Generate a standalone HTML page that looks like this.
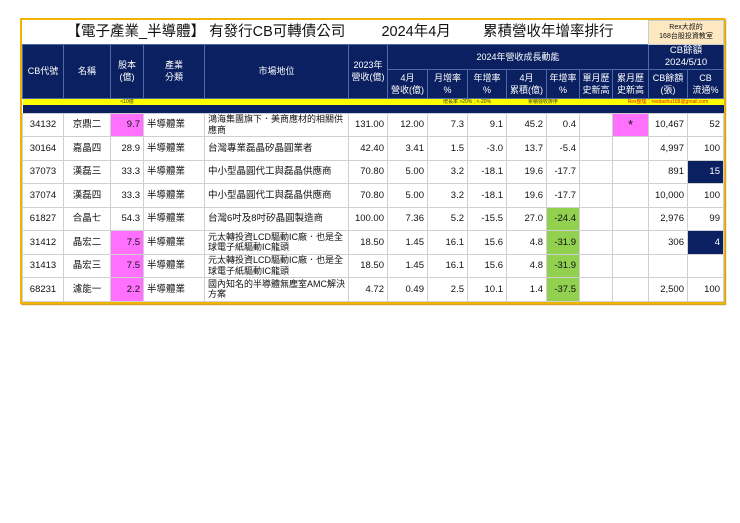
<!DOCTYPE html>
<html><head><meta charset="utf-8"><style>
html,body{margin:0;padding:0;background:#fff;width:740px;height:523px;overflow:hidden}
body{font-family:"Liberation Sans","Noto Sans CJK TC",sans-serif}
#f{position:absolute;left:20px;top:18px;border:2px solid #f0b400;width:701px;box-shadow:1px 1px 1px #c89000}
table{border-collapse:collapse;table-layout:fixed;width:701px}
td{padding:0 3px;font-size:9.5px;color:#111;border:1px solid #cfcfcf;overflow:hidden;white-space:nowrap;line-height:11px}
.t td{border:none}
.h td{background:#0b2060;color:#fff;text-align:center;border:1px solid #4a6aa8;font-size:9px;line-height:12px;padding:0}
.y td{background:#ffff00;font-size:5px;line-height:6px;height:6px;border:none;color:#333;padding:0}
.nb td{background:#0b2060;height:8px;border:none;padding:0}
.r td{height:22.5px}
.c{text-align:center}.rt{text-align:right}
.m{background:#ff70ff}.g{background:#92d050}.n{background:#0b2060;color:#fff!important}
.w{white-space:normal;font-size:9px;line-height:10.5px}
</style></head><body>
<div id="f"><table>
<colgroup><col style="width:41px"><col style="width:47px"><col style="width:33px"><col style="width:61px"><col style="width:144px"><col style="width:39px"><col style="width:40px"><col style="width:40px"><col style="width:39px"><col style="width:40px"><col style="width:33px"><col style="width:33px"><col style="width:36px"><col style="width:39px"><col style="width:36px"></colgroup>
<tr class="t"><td colspan="13" style="height:23px;font-size:14.5px;padding-left:44px;color:#111">【電子產業_半導體】 有發行CB可轉債公司&nbsp;&nbsp;&nbsp;&nbsp;&nbsp;&nbsp;&nbsp;&nbsp;&nbsp;2024年4月&nbsp;&nbsp;&nbsp;&nbsp;&nbsp;&nbsp;&nbsp;&nbsp;累積營收年增率排行</td><td colspan="2" style="background:#fde8c2;text-align:center;font-size:7px;line-height:9px;border:1px solid #ccc">Rex大叔的<br>168台股投資教室</td></tr>
<tr class="h"><td rowspan="2">CB代號</td><td rowspan="2">名稱</td><td rowspan="2">股本<br>(億)</td><td rowspan="2">產業<br>分類</td><td rowspan="2">市場地位</td><td rowspan="2">2023年<br>營收(億)</td><td colspan="7" style="height:20px">2024年營收成長動能</td><td colspan="2" style="font-size:9.5px">CB餘額<br>2024/5/10</td></tr>
<tr class="h"><td style="height:28px">4月<br>營收(億)</td><td>月增率<br>%</td><td>年增率<br>%</td><td>4月<br>累積(億)</td><td>年增率<br>%</td><td>單月歷<br>史新高</td><td>累月歷<br>史新高</td><td>CB餘額<br>(張)</td><td>CB<br>流通%</td></tr>
<tr class="y"><td></td><td></td><td class="c">&lt;10億</td><td></td><td></td><td></td><td></td><td colspan="2" class="c">增長率 &gt;20% ; &lt;-20%</td><td colspan="2" class="c">累積營收排序</td><td></td><td colspan="3" class="c" style="color:#e02000">Rex整理：rexdashu168@gmail.com</td></tr>
<tr class="nb"><td colspan="15"></td></tr>
<tr class="r"><td class="c">34132</td><td class="c">京鼎二</td><td class="rt m">9.7</td><td>半導體業</td><td class="w">鴻海集團旗下．美商應材的相關供應商</td><td class="rt">131.00</td><td class="rt">12.00</td><td class="rt">7.3</td><td class="rt">9.1</td><td class="rt">45.2</td><td class="rt">0.4</td><td></td><td class="c m" style="font-size:13px">*</td><td class="rt">10,467</td><td class="rt">52</td></tr>
<tr class="r"><td class="c">30164</td><td class="c">嘉晶四</td><td class="rt">28.9</td><td>半導體業</td><td>台灣專業磊晶矽晶圓業者</td><td class="rt">42.40</td><td class="rt">3.41</td><td class="rt">1.5</td><td class="rt">-3.0</td><td class="rt">13.7</td><td class="rt">-5.4</td><td></td><td></td><td class="rt">4,997</td><td class="rt">100</td></tr>
<tr class="r"><td class="c">37073</td><td class="c">漢磊三</td><td class="rt">33.3</td><td>半導體業</td><td>中小型晶圓代工與磊晶供應商</td><td class="rt">70.80</td><td class="rt">5.00</td><td class="rt">3.2</td><td class="rt">-18.1</td><td class="rt">19.6</td><td class="rt">-17.7</td><td></td><td></td><td class="rt">891</td><td class="rt n">15</td></tr>
<tr class="r"><td class="c">37074</td><td class="c">漢磊四</td><td class="rt">33.3</td><td>半導體業</td><td>中小型晶圓代工與磊晶供應商</td><td class="rt">70.80</td><td class="rt">5.00</td><td class="rt">3.2</td><td class="rt">-18.1</td><td class="rt">19.6</td><td class="rt">-17.7</td><td></td><td></td><td class="rt">10,000</td><td class="rt">100</td></tr>
<tr class="r"><td class="c">61827</td><td class="c">合晶七</td><td class="rt">54.3</td><td>半導體業</td><td>台灣6吋及8吋矽晶圓製造商</td><td class="rt">100.00</td><td class="rt">7.36</td><td class="rt">5.2</td><td class="rt">-15.5</td><td class="rt">27.0</td><td class="rt g">-24.4</td><td></td><td></td><td class="rt">2,976</td><td class="rt">99</td></tr>
<tr class="r"><td class="c">31412</td><td class="c">晶宏二</td><td class="rt m">7.5</td><td>半導體業</td><td class="w">元太轉投資LCD驅動IC廠．也是全球電子紙驅動IC龍頭</td><td class="rt">18.50</td><td class="rt">1.45</td><td class="rt">16.1</td><td class="rt">15.6</td><td class="rt">4.8</td><td class="rt g">-31.9</td><td></td><td></td><td class="rt">306</td><td class="rt n">4</td></tr>
<tr class="r"><td class="c">31413</td><td class="c">晶宏三</td><td class="rt m">7.5</td><td>半導體業</td><td class="w">元太轉投資LCD驅動IC廠．也是全球電子紙驅動IC龍頭</td><td class="rt">18.50</td><td class="rt">1.45</td><td class="rt">16.1</td><td class="rt">15.6</td><td class="rt">4.8</td><td class="rt g">-31.9</td><td></td><td></td><td></td><td></td></tr>
<tr class="r"><td class="c">68231</td><td class="c">濾能一</td><td class="rt m">2.2</td><td>半導體業</td><td class="w">國內知名的半導體無塵室AMC解決方案</td><td class="rt">4.72</td><td class="rt">0.49</td><td class="rt">2.5</td><td class="rt">10.1</td><td class="rt">1.4</td><td class="rt g">-37.5</td><td></td><td></td><td class="rt">2,500</td><td class="rt">100</td></tr>
</table></div>
</body></html>
